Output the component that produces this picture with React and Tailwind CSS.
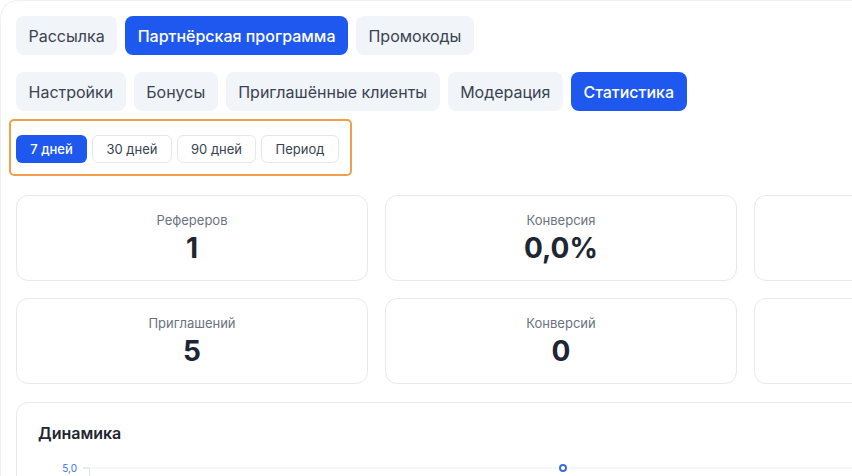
import React from "react";

const mainTabs = ["Рассылка", "Партнёрская программа", "Промокоды"];
const subTabs = ["Настройки", "Бонусы", "Приглашённые клиенты", "Модерация", "Статистика"];
const periods = ["7 дней", "30 дней", "90 дней", "Период"];

const stats = [
  [
    { label: "Рефереров", value: "1" },
    { label: "Конверсия", value: "0,0%" },
    { label: "", value: "" },
  ],
  [
    { label: "Приглашений", value: "5" },
    { label: "Конверсий", value: "0" },
    { label: "", value: "" },
  ],
];

function Tab({ label, active }) {
  return (
    <button
      className={
        "h-[39px] px-[12.5px] rounded-lg text-[16px] leading-none whitespace-nowrap " +
        (active ? "bg-[#1f58ef] text-white font-medium" : "bg-[#f1f4f8] text-[#3a4352]")
      }
    >
      {label}
    </button>
  );
}

function StatCard({ label, value }) {
  return (
    <div className="h-[86px] rounded-xl border border-[#e7e9ed] bg-white flex flex-col items-center pt-[15px]">
      <div className="h-[18px] text-[13px] leading-[18px] text-[#6b7280]">{label}</div>
      <div className="mt-[2px] h-[34px] text-[28px] leading-[34px] font-bold text-[#1e2533]">{value}</div>
    </div>
  );
}

export default function App() {
  return (
    <div
      className="w-[852px] h-[476px] overflow-hidden bg-white"
      style={{ fontFamily: "Inter, 'Noto Sans', sans-serif" }}
    >
      <div className="w-[1140px] min-h-[600px] rounded-tl-[18px] border-l border-t border-[#eef0f3] pt-[15px] pl-[15px]">
        <div className="flex gap-[8px]">
          {mainTabs.map((t, i) => (
            <Tab key={t} label={t} active={i === 1} />
          ))}
        </div>

        <div className="flex gap-[8px] mt-[17px]">
          {subTabs.map((t, i) => (
            <Tab key={t} label={t} active={i === 4} />
          ))}
        </div>

        <div className="mt-[8px] -ml-[7px] w-[343px] h-[57px] rounded-[5px] border-2 border-[#f0a04b] pl-[5px] pt-[14px] flex gap-[5px]">
          {periods.map((p, i) => (
            <button
              key={p}
              className={
                "h-[28px] rounded-md text-[13px] leading-none " +
                (i === 0
                  ? "bg-[#1f58ef] text-white font-medium w-[71px]"
                  : "bg-white border border-[#e5e7eb] text-[#3a4352] " +
                    (i === 1 ? "w-[80px]" : i === 2 ? "w-[79px]" : "w-[78px]"))
              }
            >
              {p}
            </button>
          ))}
        </div>

        <div className="mt-[19px] flex flex-col gap-[17px] w-[1090px]">
          {stats.map((row, r) => (
            <div key={r} className="grid grid-cols-3 gap-[17px]">
              {row.map((s, i) => (
                <StatCard key={i} {...s} />
              ))}
            </div>
          ))}
        </div>

        <div className="mt-[18px] w-[1090px] h-[300px] rounded-xl border border-[#e7e9ed] bg-white pt-[20px] pl-[21px]">
          <div className="text-[16px] leading-[20px] font-semibold text-[#1e2533]">Динамика</div>
          <div className="mt-[19px] flex">
            <div className="w-[45px] pr-[6px] text-right text-[10px] leading-none text-[#3b6fd8] pt-[1px]">5,0</div>
            <svg width="1000" height="200" className="block">
              <line x1="6" y1="6" x2="1000" y2="6" stroke="#eef0f3" strokeWidth="1" />
              <line x1="0" y1="6" x2="6" y2="6" stroke="#cfd4dc" strokeWidth="1" />
              <line x1="6.5" y1="6" x2="6.5" y2="200" stroke="#dfe3e8" strokeWidth="1" />
              <circle cx="480" cy="6" r="3" fill="#fff" stroke="#3b6fd8" strokeWidth="2" />
            </svg>
          </div>
        </div>
      </div>
    </div>
  );
}
